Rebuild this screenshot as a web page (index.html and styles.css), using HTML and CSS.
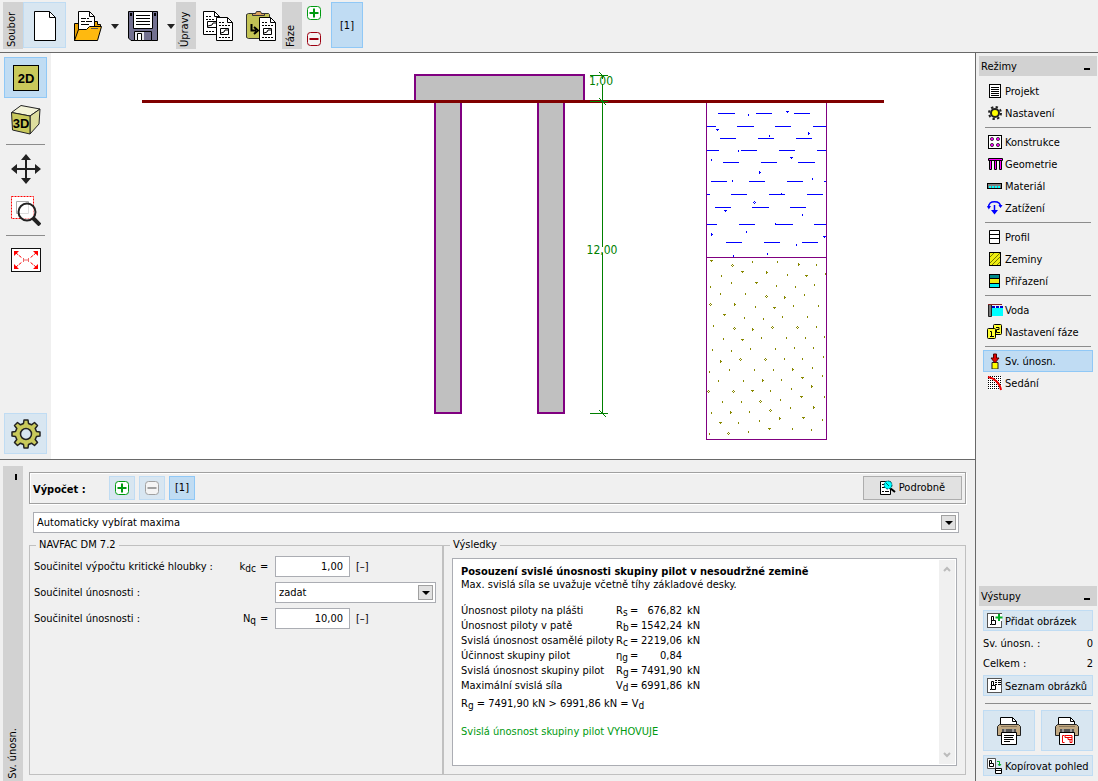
FILE: index.html
```html
<!DOCTYPE html>
<html lang="cs">
<head>
<meta charset="utf-8">
<title>Skupina pilot</title>
<link rel="stylesheet" href="styles.css">
</head>
<body>
<svg class="defs" aria-hidden="true">
  <defs>
    <symbol id="plus" viewBox="0 0 14 14"><rect x=".5" y=".5" width="13" height="13" rx="3" fill="#fff" stroke="currentColor"/><path d="M7 2.500v9M2.500 7h9" stroke="currentColor" stroke-width="2"/></symbol>
    <symbol id="minus" viewBox="0 0 14 14"><rect x=".5" y=".5" width="13" height="13" rx="3" fill="#f4f4f4" stroke="currentColor"/><path d="M2.500 7h9" stroke="currentColor" stroke-width="2"/></symbol>
    <symbol id="printer" viewBox="0 0 24 28"><path d="M3.500 8V.5h12l4 4V8z" fill="#fff" stroke="#000"/><path d="M15.500.5v4h4" fill="none" stroke="#000"/><path d="M2.500 7.500h19l2 2v9H.5v-9z" fill="#c0a882" stroke="#222"/><path d="M4 9.500h16" stroke="#8a765a"/><path d="M5 12h14v3H5z" fill="#555"/><path d="M8 12v3M16 12v3" stroke="#ddd"/><path d="M4.500 15.500h15v12h-15z" fill="#fff" stroke="#000"/></symbol>
    <symbol id="page-b" viewBox="0 0 16 16"><rect x=".5" y=".5" width="14" height="14" fill="#fff" stroke="#555"/><path d="M4.500 3.500h2v4h2v4h-4zM4.500 7.500h2M3 11.500h1" fill="none" stroke="#000"/></symbol>
    <marker id="tick" markerUnits="userSpaceOnUse" markerWidth="1" markerHeight="2"><path d="M0 0h1v2H0z" fill="#00f"/></marker>
    <marker id="tee" markerUnits="userSpaceOnUse" markerWidth="3" markerHeight="2" refX="1"><path d="M0 0h3v1H2v1H1V1H0z" fill="#00f"/></marker>
    <marker id="nub" markerUnits="userSpaceOnUse" markerWidth="2" markerHeight="3" refY="1"><path d="M0 0h1v1h1v1H1v1H0z" fill="#00f"/></marker>
    <marker id="ring" markerUnits="userSpaceOnUse" markerWidth="3" markerHeight="3" refX="1" refY="1"><path d="M1 0h1v1H1zM0 1h1v1H0zM2 1h1v1H2zM1 2h1v1H1z" fill="#00f"/></marker>
    <marker id="tick-s" markerUnits="userSpaceOnUse" markerWidth="1" markerHeight="2"><path d="M0 0h1v2H0z" fill="#880"/></marker>
    <marker id="tee-s" markerUnits="userSpaceOnUse" markerWidth="3" markerHeight="2" refX="1"><path d="M0 0h3v1H2v1H1V1H0z" fill="#880"/></marker>
    <marker id="nub-s" markerUnits="userSpaceOnUse" markerWidth="2" markerHeight="3" refY="1"><path d="M0 0h1v1h1v1H1v1H0z" fill="#880"/></marker>
    <marker id="ring-s" markerUnits="userSpaceOnUse" markerWidth="3" markerHeight="3" refX="1" refY="1"><path d="M1 0h1v1H1zM0 1h1v1H0zM2 1h1v1H2zM1 2h1v1H1z" fill="#880"/></marker>
  </defs>
</svg>

<header class="toolbar">
  <span class="vlabel">Soubor</span>
  <button class="tool tool-new hot" aria-label="Nový"><svg width="24" height="30" viewBox="0 0 24 30"><path d="M1.500.5h15l6 6v23h-21z" fill="#fff" stroke="#000"/><path d="M16.500.5v6h6" fill="none" stroke="#000"/></svg></button>
  <button class="tool tool-open" aria-label="Otevřít"><svg width="28" height="30" viewBox="0 0 28 30"><path d="M.5 29.500v-17h5v-2h18v3h3v4z" fill="#e8a000" stroke="#000"/><path d="M4.500 20V.5h11l5 5V20z" fill="#fff" stroke="#000"/><path d="M15.500.5v5h5" fill="none" stroke="#000"/><path d="M7 7.500h5m1 0h2M7 10.500h4m1 0h6M7 13.500h8" stroke="#000"/><path d="M.5 29.500l4-11h8l3-3h12l-4 14z" fill="#ffb90f" stroke="#000"/><path d="M17 17.500h7" stroke="#555"/></svg></button>
  <button class="tool tool-arrow" aria-label="Poslední soubory"><svg width="8" height="5" viewBox="0 0 8 5"><path d="M0 0h8L4 5z" fill="#222"/></svg></button>
  <button class="tool tool-save" aria-label="Uložit"><svg width="30" height="30" viewBox="0 0 30 30"><path d="M.5.5h29v29H3l-2.500-2.500z" fill="#727090" stroke="#000"/><path d="M5.500.5h19v17h-19z" fill="#fff" stroke="#000"/><path d="M8 4.500h14M8 7.500h14M8 10.500h14M8 13.500h14" stroke="#000"/><path d="M6.500 20.500h17v9h-17z" fill="#e8e8ee" stroke="#000"/><path d="M16 21h7v8h-7z" fill="#727090"/><path d="M9.500 22.500h4v7h-4z" fill="#fff" stroke="#000"/><path d="M2 2h2v3H2zM26 2h2v3h-2z" fill="#000"/></svg></button>
  <button class="tool tool-arrow" aria-label="Uložit jako"><svg width="8" height="5" viewBox="0 0 8 5"><path d="M0 0h8L4 5z" fill="#222"/></svg></button>
  <span class="vlabel">Úpravy</span>
  <button class="tool tool-copy" aria-label="Kopírovat"><svg width="30" height="30" viewBox="0 0 30 30"><path d="M.5.5h11l5 5v18H.5z" fill="#fff" stroke="#000"/><path d="M11.500.5v5h5" fill="none" stroke="#000"/><path d="M3 5.500h6M3 8.500h9M3 20.500h9" stroke="#000" stroke-dasharray="2 1"/><path d="M13 10.500H4.500v6H13M5 15l4-1 1-2h3" fill="none" stroke="#000"/><path d="M13.500 6.500h11l5 5v18h-16z" fill="#fff" stroke="#000"/><path d="M24.500 6.500v5h5" fill="none" stroke="#000"/><path d="M16 11.500h6M16 14.500h11M16 26.500h11" stroke="#000" stroke-dasharray="2 1"/><path d="M17.500 17.500h8v6h-8zM18 22l3-1 1-2h3" fill="none" stroke="#000"/></svg></button>
  <button class="tool tool-paste" aria-label="Vložit"><svg width="30" height="30" viewBox="0 0 30 30"><path d="M2.500 2.500h20l1 1v23l-1 1h-20l-2-1v-23z" fill="#c3c355" stroke="#333"/><path d="M6.500 4.500v-2h3l1-2h4l1 2h3v2z" fill="#d9a05c" stroke="#333"/><path d="M5.500 13v6.500H10M8 16l4 3.500L8 23" fill="none" stroke="#000" stroke-width="2"/><path d="M13.500 6.500h11l5 5v18h-16z" fill="#fff" stroke="#000"/><path d="M24.500 6.500v5h5" fill="none" stroke="#000"/><path d="M16 11.500h6M16 14.500h11M16 26.500h11" stroke="#000" stroke-dasharray="2 1"/><path d="M17.500 17.500h8v6h-8zM18 22l3-1 1-2h3" fill="none" stroke="#000"/></svg></button>
  <span class="vlabel">Fáze</span>
  <div class="phase-edit">
    <button class="green" aria-label="Přidat fázi"><svg width="14" height="14"><use href="#plus"/></svg></button>
    <button class="red" aria-label="Odebrat fázi"><svg width="14" height="14"><use href="#minus"/></svg></button>
  </div>
  <button class="tool tool-phase selected">[1]</button>
</header>

<div class="workspace">
  <main class="main">
    <div class="view">
      <nav class="viewbar" aria-label="Pohled">
        <button class="viewbtn selected" aria-label="2D"><svg width="26" height="26" viewBox="0 0 26 26"><rect x=".5" y=".5" width="25" height="25" fill="#c9c95b" stroke="#000"/><text x="13" y="18" text-anchor="middle" class="glyph">2D</text></svg></button>
        <button class="viewbtn" aria-label="3D"><svg width="30" height="30" viewBox="0 0 30 30"><path d="M.5 7.500L10 .5l19 3.500-10 7z" fill="#f3f3d8" stroke="#222"/><path d="M29 4l-1 15-9 10V11z" fill="#dede9e" stroke="#222"/><path d="M.5 7.500L19 11v18L1.500 25z" fill="#c9c95b" stroke="#222"/><text x="10" y="23" text-anchor="middle" class="glyph">3D</text></svg></button>
        <hr>
        <button class="viewbtn" aria-label="Posun"><svg width="30" height="30" viewBox="0 0 30 30"><path d="M15 4v22M4 15h22" stroke="#222" stroke-width="2"/><path d="M15 0l5 6H10zM15 30l5-6H10zM0 15l6-5v10zM30 15l-6-5v10z" fill="#222"/></svg></button>
        <button class="viewbtn" aria-label="Lupa"><svg width="30" height="30" viewBox="0 0 30 30"><rect x=".5" y=".5" width="22" height="22" fill="#fff" stroke="red" stroke-dasharray="2 1"/><path d="M5.500 5.500h12v12h-12z" fill="#fff" stroke="#aaa"/><path d="M22 22l7 7" stroke="#222" stroke-width="4"/><circle cx="16" cy="16" r="8.500" fill="#fff" fill-opacity=".6" stroke="#222" stroke-width="2"/></svg></button>
        <hr>
        <button class="viewbtn" aria-label="Zobrazit vše"><svg width="30" height="24" viewBox="0 0 30 24"><rect x=".5" y=".5" width="29" height="23" fill="#fff" stroke="#111"/><path d="M5 5l6 5M25 5l-6 5M5 19l6-5M25 19l-6-5" stroke="red" stroke-dasharray="3 1"/><path d="M3 3h5L3 8zM27 3h-5l5 5zM3 21h5l-5-5zM27 21h-5l5-5z" fill="red"/><path d="M12.500 10v4M17.500 10v4M13 12h4" stroke="#e66"/></svg></button>
        <button class="viewbtn hot settings" aria-label="Nastavení zobrazení"><svg width="30" height="30" viewBox="-15 -15 30 30"><path d="M-2.500-10.500L-2-14H2L2.500-10.500 5.500-9.200 8.500-11.500 11.500-8.500 9.200-5.500 10.500-2.500 14-2V2L10.500 2.500 9.200 5.500 11.500 8.500 8.500 11.500 5.500 9.200 2.500 10.500 2 14H-2L-2.500 10.500-5.500 9.200-8.500 11.500-11.500 8.500-9.200 5.500-10.500 2.500-14 2V-2L-10.500-2.500-9.200-5.500-11.500-8.500-8.500-11.500-5.500-9.200z" fill="#c9c95b" stroke="#222" stroke-width="1.500" stroke-linejoin="round"/><circle r="5.500" fill="#d8e6f1" stroke="#222" stroke-width="1.500"/></svg></button>
      </nav>
      <svg class="drawing" viewBox="51 53 924 406" role="img" aria-label="Svislý řez skupinou pilot">
        <g shape-rendering="crispEdges">
          <g fill="#c0c0c0" stroke="#800080" stroke-width="2">
            <rect x="415" y="75" width="169" height="27"/>
            <rect x="435" y="102" width="26" height="311"/>
            <rect x="538" y="102" width="26" height="311"/>
          </g>
          <g stroke="#00f">
            <path d="M718 113.500h17m21 0h16m22 0h16M707 126.500h9m21 0h17m21 0h16m22 0h13M720 138.500h16m22 0h16m22 0h16M707 150.500h12m22 0h16m22 0h16m22 0h9M723 162.500h16m22 0h16m21 0h17M711 181.500h16m22 0h16m22 0h16m21 0h2M707 194.500h3m21 0h16m22 0h16m22 0h16M715 207.500h16m21 0h17m21 0h16M707 224.500h10m22 0h16m20 0h18m21 0h12M726 242.500h16m22 0h16m22 0h16"/>
          </g>
          <g class="clay">
            <polyline class="tick" points="748,114 769,135 738,150 711,159 732,180 812,178 781,193 802,214 746,231 775,223 796,244 733,255 767,253"/>
            <polyline class="tee" points="787,111 717,129 791,157 725,210 824,236"/>
            <polyline class="nub" points="808,133 759,172 711,234"/>
            <polyline class="ring" points="754,202 754,202"/>
          </g>
          <g class="sand">
            <polyline class="tick" points="752,261 777,261 816,264 721,275 787,274 825,273 731,282 776,285 795,286 710,286 814,284 720,293 745,293 804,294 755,306 793,305 818,305 782,316 807,316 744,317 763,318 713,325 816,326 723,338 761,337 786,337 805,337 824,336 712,349 731,350 750,348 775,348 794,347 813,347 784,358 802,358 823,356 709,371 729,369 754,369 773,369 812,367 822,375 718,380 743,380 781,379 791,388 770,390 722,401 741,401 780,399 824,396 790,407 711,412 749,411 759,420 738,422 822,419 792,428 811,429 709,433 748,431"/>
            <polyline class="tee" points="711,260 742,271 756,282 806,275 774,307 724,314 742,339 802,377 752,390 801,396 803,417 720,422 769,428"/>
            <polyline class="nub" points="798,264 766,272 734,304 784,297 752,329 720,361 792,369 762,380 811,386 813,407 730,412 779,418"/>
            <polyline class="ring" points="732,265 766,296 710,304 734,328 772,327 797,327 740,359 765,359 708,391 733,391 760,401 770,410 728,433"/>
          </g>
          <path d="M706.500 103v336.500h120V103M706.500 257.500h120" fill="none" stroke="#800080"/>
          <path d="M142 101.500h742" stroke="#800000" stroke-width="3"/>
          <path d="M602.500 75v339M590 75.500h18M590 101.500h18M590 413.500h18" stroke="#008000"/>
        </g>
        <path d="M599 72l7 7M599 98l7 7M599 410l7 7" stroke="#008000"/>
        <path d="M589 77h25v9h-25zM586 245h32v10h-32z" fill="#fff"/>
        <path d="M602.500 77v2M602.500 84v2M602.500 245v2M602.500 253v2" stroke="#008000"/>
        <text x="601" y="85" text-anchor="middle" class="dim">1,00</text>
        <text x="602" y="254" text-anchor="middle" class="dim">12,00</text>
      </svg>
    </div>

    <section class="frame">
      <div class="frame-tab"><i></i><span>Sv. únosn.</span></div>
      <div class="frame-body">
        <div class="calc-bar">
          <b>Výpočet :</b>
          <button class="chip hot green" aria-label="Přidat výpočet"><svg width="14" height="14"><use href="#plus"/></svg></button>
          <button class="chip hot gray" aria-label="Odebrat výpočet"><svg width="14" height="14"><use href="#minus"/></svg></button>
          <button class="chip selected">[1]</button>
          <button class="detail"><svg width="16" height="16" viewBox="0 0 16 16"><path d="M.5 1.500h10v13H.5z" fill="#fff" stroke="#000"/><path d="M2 4.500h3M2 7.500h3M2 11.500h2m1 0h4" stroke="#000"/><path d="M10 8l5 4" stroke="#000" stroke-width="2"/><circle cx="8" cy="5" r="4" fill="#0ff" stroke="#045" stroke-dasharray="2 1"/><path d="M6 3l3 3" stroke="#066"/></svg>Podrobně</button>
        </div>
        <div class="combo combo-wide">
          <select aria-label="Způsob výpočtu"><option>Automaticky vybírat maxima</option></select>
          <span class="combo-arrow"><svg width="8" height="4" viewBox="0 0 8 4"><path d="M0 0h8L4 4z"/></svg></span>
        </div>
        <div class="groups">
          <fieldset class="group params">
            <legend>NAVFAC DM 7.2</legend>
            <div class="field"><label for="kdc">Součinitel výpočtu kritické hloubky :</label><span class="sym">k<sub>dc</sub></span><span>=</span><input id="kdc" value="1,00"><span class="unit">[–]</span></div>
            <div class="field"><label for="mode">Součinitel únosnosti :</label><span class="sym"></span><span></span>
              <div class="combo"><select id="mode"><option>zadat</option></select><span class="combo-arrow"><svg width="8" height="4" viewBox="0 0 8 4"><path d="M0 0h8L4 4z"/></svg></span></div></div>
            <div class="field"><label for="nq">Součinitel únosnosti :</label><span class="sym">N<sub>q</sub></span><span>=</span><input id="nq" value="10,00"><span class="unit">[–]</span></div>
          </fieldset>
          <fieldset class="group results">
            <legend>Výsledky</legend>
            <div class="report">
              <div class="report-text">
                <h2>Posouzení svislé únosnosti skupiny pilot v nesoudržné zemině</h2>
                <p>Max. svislá síla se uvažuje včetně tíhy základové desky.</p>
                <table>
                  <tr><td>Únosnost piloty na plášti</td><td>R<sub>s</sub></td><td>=</td><td>676,82</td><td>kN</td></tr>
                  <tr><td>Únosnost piloty v patě</td><td>R<sub>b</sub></td><td>=</td><td>1542,24</td><td>kN</td></tr>
                  <tr><td>Svislá únosnost osamělé piloty</td><td>R<sub>c</sub></td><td>=</td><td>2219,06</td><td>kN</td></tr>
                  <tr><td>Účinnost skupiny pilot</td><td>η<sub>g</sub></td><td>=</td><td>0,84</td><td></td></tr>
                  <tr><td>Svislá únosnost skupiny pilot</td><td>R<sub>g</sub></td><td>=</td><td>7491,90</td><td>kN</td></tr>
                  <tr><td>Maximální svislá síla</td><td>V<sub>d</sub></td><td>=</td><td>6991,86</td><td>kN</td></tr>
                </table>
                <p>R<sub>g</sub> = 7491,90 kN &gt; 6991,86 kN = V<sub>d</sub></p>
                <p class="verdict">Svislá únosnost skupiny pilot VYHOVUJE</p>
              </div>
              <div class="scroll"><svg width="8" height="6" viewBox="0 0 8 6"><path d="M1 5l3-3 3 3"/></svg><svg width="8" height="6" viewBox="0 0 8 6"><path d="M1 1l3 3 3-3"/></svg></div>
            </div>
          </fieldset>
        </div>
      </div>
    </section>
  </main>

  <aside class="side">
    <section>
      <h3 class="side-head">Režimy<i></i></h3>
      <nav class="modes">
        <button><svg viewBox="0 0 16 16"><rect x="2.500" y="1.500" width="11" height="13" fill="#fff" stroke="#000"/><path d="M4 4.500h8M4 6.500h8M4 8.500h8M4 10.500h8M4 12.500h8" stroke="#000"/></svg>Projekt</button>
        <button><svg viewBox="0 0 16 16"><circle cx="8" cy="8" r="6" fill="none" stroke="#222" stroke-width="2" stroke-dasharray="2.350 2.350"/><circle cx="8" cy="8" r="4" fill="#ff0" stroke="#222" stroke-width="2"/></svg>Nastavení</button>
        <hr>
        <button><svg viewBox="0 0 16 16"><rect x="1.500" y="1.500" width="13" height="13" fill="#fff" stroke="#000"/><g fill="#f0f" stroke="#222" stroke-width=".8"><circle cx="5" cy="5" r="1.600"/><circle cx="11" cy="5" r="1.600"/><circle cx="5" cy="11" r="1.600"/><circle cx="11" cy="11" r="1.600"/></g></svg>Konstrukce</button>
        <button><svg viewBox="0 0 16 16"><path d="M2.500 4.500h2v9h-2zM7.500 4.500h2v9h-2zM12.500 4.500h2v9h-2z" fill="#f0f" stroke="#000"/><path d="M1.500 2.500h14v2h-14z" fill="#f0f" stroke="#000"/></svg>Geometrie</button>
        <button><svg viewBox="0 0 16 16"><rect x=".5" y="5.500" width="14" height="5" fill="#808080" stroke="#000"/><path d="M2 9h11" stroke="#0ff" stroke-width="2" stroke-dasharray="2 1"/></svg>Materiál</button>
        <button><svg viewBox="0 0 16 16"><path d="M1.500 8C1.500 3 4 1.800 7.500 1.800S13.500 3 13.500 7M7.500 5v8" fill="none" stroke="#00f" stroke-width="1.500"/><path d="M4 10h7l-3.500 4.500zM0 6h4L1.800 9.500zM11.500 5h4l-2 3z" fill="#00f"/></svg>Zatížení</button>
        <hr>
        <button><svg viewBox="0 0 16 16"><path d="M2.500 1.500h10v13h-10zM2.500 5.500h10M2.500 9.500h10" fill="#fff" stroke="#000"/></svg>Profil</button>
        <button><svg viewBox="0 0 16 16"><rect x="2.500" y="1.500" width="11" height="13" fill="#ee1" stroke="#000"/><path d="M3 6l4-4M3 12L13 2M5 14l8-8M10 14l3-3" stroke="#770"/></svg>Zeminy</button>
        <button><svg viewBox="0 0 16 16"><rect x="2.500" y="1.500" width="10" height="13" fill="#ee1" stroke="#000"/><path d="M3 2h9v3H3z" fill="#088"/><path d="M3 11h9v3H3z" fill="#0ee"/><path d="M3 5.500h9M3 10.500h9" stroke="#000"/></svg>Přiřazení</button>
        <hr>
        <button><svg viewBox="0 0 16 16"><path d="M5 6h11v8H5z" fill="#0ff"/><path d="M1.500 2.500h3v12h-3z" fill="#777" stroke="#222"/><path d="M1 2.500h14" stroke="#822"/><path d="M5 5h11" stroke="#00c" stroke-width="2" stroke-dasharray="3 1"/></svg>Voda</button>
        <button><svg viewBox="0 0 16 16"><g fill="#ff3" stroke="#000"><rect x="6.500" y=".5" width="8" height="10" rx="1"/><rect x=".5" y="4.500" width="8" height="10" rx="1"/></g><path d="M3 7.500h1.500V12M3 12.500h4M9 3.500h3v2H9.500v3H13" fill="none" stroke="#000"/></svg>Nastavení fáze</button>
        <hr>
        <button class="selected"><svg viewBox="0 0 16 16"><path d="M5 9.500h6V16H5z" fill="#ff0" stroke="#222"/><path d="M6.500 1h3v4H12L8 10 4 5h2.500z" fill="#d00" stroke="#500"/></svg>Sv. únosn.</button>
        <button><svg viewBox="0 0 16 16"><path d="M1 1h14v14H1z" fill="#fff"/><path d="M1 1.500h14M1 3.500h14M1 5.500h14M1 7.500h14M1 9.500h14M1 11.500h14M1 13.500h14" stroke="#000" stroke-dasharray="1 1"/><path d="M1 2c6 1 12 6 13 13" fill="none" stroke="#e00" stroke-width="2"/></svg>Sedání</button>
      </nav>
    </section>
    <section>
      <h3 class="side-head">Výstupy<i></i></h3>
      <div class="outputs">
        <button class="hot out"><svg width="16" height="16" viewBox="0 0 16 16"><use href="#page-b"/><path d="M9 1h6v7H9z" fill="#fff"/><path d="M12 1v7M8.500 4.500h7" stroke="#0a2" stroke-width="2"/></svg>Přidat obrázek</button>
        <div class="counts">
          <div class="count"><span>Sv. únosn. :</span><span>0</span></div>
          <div class="count"><span>Celkem :</span><span>2</span></div>
        </div>
        <button class="hot out"><svg width="16" height="16" viewBox="0 0 16 16"><use href="#page-b"/><path d="M8 2.500h2m1 0h3M8 4.500h2m1 0h3M8 6.500h2m1 0h3" stroke="#000"/></svg>Seznam obrázků</button>
        <hr>
        <div class="printers">
          <button class="hot" aria-label="Tisk protokolu"><svg width="24" height="28" viewBox="0 0 24 28"><use href="#printer"/><path d="M7 18.500h10M7 20.500h9M7 22.500h10M7 24.500h6" stroke="#000"/></svg></button>
          <button class="hot" aria-label="Tisk pohledu"><svg width="24" height="28" viewBox="0 0 24 28"><use href="#printer"/><path d="M9.500 18.500h-2v7h2M10 18.500h7v7h-2v-3h-2v-2h-3zM12 20.500h5M14 22.500h3" fill="none" stroke="#e00"/></svg></button>
        </div>
        <button class="hot out"><svg width="16" height="16" viewBox="0 0 16 16"><path d="M.5.5h8v10h-8z" fill="#fff" stroke="#555"/><path d="M2.500 2.500h2v3h2v3h-4zM2.500 5.500h2" fill="none" stroke="#000"/><path d="M10 3.500h2.500V7M11 6l1.500 2L14 6" fill="none" stroke="#0a2"/><path d="M8.500 10.500h6v5h-6zM8 12.500h7" fill="#fff" stroke="#000"/></svg>Kopírovat pohled</button>
      </div>
    </section>
  </aside>
</div>
</body>
</html>
```
FILE: styles.css
```css
* { box-sizing: border-box; }
body {
  margin: 0;
  height: 100vh;
  display: flex;
  flex-direction: column;
  background: #f0f0f0;
  color: #000;
  font: 11px/14px "DejaVu Sans Condensed", "DejaVu Sans", sans-serif;
}
button, input, select { font: inherit; color: inherit; border-radius: 0; margin: 0; }
button {
  display: flex;
  align-items: center;
  justify-content: center;
  flex: none;
  padding: 0;
  border: 1px solid transparent;
  background: none;
}
svg { flex: none; display: block; }
hr { margin: 0; border: 0; height: 1px; background: #8c8c8c; }
h2, h3, p { margin: 0; font-size: inherit; }
sub { font-size: 10px; line-height: 0; vertical-align: -2px; }
.defs { position: absolute; width: 0; height: 0; }
.hot { background: #d8e6f1; border-color: #c0dcf3; }
.selected { background: #c0dcf3; border-color: #90c8f6; }
.green { color: #009a10; }
.red { color: #9c0010; }
.gray { color: #a0a0a0; }

.toolbar {
  display: flex;
  flex: none;
  height: 53px;
  padding: 2px 3px;
  border-bottom: 1px solid #696969;
}
.vlabel {
  width: 20px;
  height: 47px;
  padding: 2px 0;
  line-height: 18px;
  background: #d2d2d2;
  writing-mode: vertical-rl;
  transform: rotate(180deg);
}
.tool { height: 46px; padding-top: 2px; }
.tool-new { width: 43px; }
.tool-open { width: 44px; }
.tool-save { width: 46px; }
.tool-copy, .tool-paste { width: 43px; }
.tool-arrow { width: 10px; border: 0; }
.phase-edit { display: flex; flex-direction: column; justify-content: space-between; padding: 4px 5px 2px; height: 46px; }
.phase-edit button { border: 0; }
.tool-phase { width: 32px; margin-left: 5px; }

.workspace { display: flex; flex: 1; min-height: 0; }
.main { display: flex; flex-direction: column; flex: 1; min-width: 0; }
.view { display: flex; flex: 1; min-height: 0; border-bottom: 1px solid #696969; }
.viewbar { display: flex; flex-direction: column; gap: 1px; width: 51px; padding: 4px 4px 5px; }
.viewbtn { width: 43px; height: 41px; }
.viewbar hr { width: 39px; margin: 3px 2px 2px; }
.settings { margin-top: auto; }
.glyph { font: bold 13px "Liberation Sans", Arial, sans-serif; }
.drawing { flex: 1; min-width: 0; height: 100%; background: #fff; }
.dim { font-size: 12px; fill: #008000; }
.drawing polyline { fill: none; }
.clay .tick { marker: url(#tick); }
.clay .tee { marker: url(#tee); }
.clay .nub { marker: url(#nub); }
.clay .ring { marker: url(#ring); }
.sand .tick { marker: url(#tick-s); }
.sand .tee { marker: url(#tee-s); }
.sand .nub { marker: url(#nub-s); }
.sand .ring { marker: url(#ring-s); }

.frame { display: flex; flex: none; height: 321px; padding: 6px 9px 0 3px; }
.frame-tab { width: 20px; padding: 8px 0 2px; display: flex; flex-direction: column; align-items: center; justify-content: space-between; background: #d2d2d2; }
.frame-tab i { width: 2px; height: 6px; margin-right: 6px; align-self: flex-end; background: #000; }
.frame-tab span { writing-mode: vertical-rl; transform: rotate(180deg); }
.frame-body { display: flex; flex-direction: column; flex: 1; min-width: 0; padding: 6px 0 6px 6px; }
.calc-bar {
  display: flex;
  align-items: center;
  gap: 4px;
  height: 32px;
  padding: 0 3px;
  border: 1px solid #a0a0a0;
  box-shadow: inset 1px 1px #fff, 1px 1px #fff;
}
.calc-bar b { width: 72px; padding-top: 4px; }
.chip { width: 26px; height: 24px; }
.detail { width: 99px; height: 24px; margin-left: auto; gap: 3px; border-color: #adadad; background: #e1e1e1; }
.combo { position: relative; display: flex; height: 21px; }
.combo select {
  width: 100%;
  padding: 0 20px 0 3px;
  appearance: none;
  border: 1px solid #abadb3;
  background: #fff;
}
.combo-arrow {
  position: absolute;
  top: 3px;
  right: 3px;
  width: 15px;
  height: 15px;
  display: grid;
  place-items: center;
  border: 1px solid #a0a0a0;
  background: #e1e1e1;
  pointer-events: none;
}
.combo-wide { margin: 8px 7px 5px 4px; }
.groups { display: flex; flex: 1; min-height: 0; }
.group { display: flex; flex-direction: column; margin: 0; min-width: 0; padding: 0 4px; border: 1px solid #c0c0c0; }
.group legend { padding: 0 3px; margin-left: 2px; }
.params { width: 414px; flex: none; padding-top: 4px; gap: 5px; }
.results { flex: 1; padding: 6px 8px 8px; }
.results legend { margin-left: -2px; }
.field { display: grid; grid-template-columns: 192px 26px 11px auto 1fr; align-items: center; column-gap: 4px; height: 21px; }
.sym { text-align: right; }
.field input { width: 75px; height: 21px; padding: 0 6px; border: 1px solid #abadb3; background: #fff; text-align: right; }
.field .combo { width: 161px; }
.unit { padding-left: 2px; }
.report { display: flex; flex: 1; min-height: 0; padding: 1px; border: 1px solid #abadb3; background: #fff; }
.report-text { flex: 1; padding: 5px 7px; }
.report-text h2 { line-height: 13px; }
.report-text p { line-height: 13px; }
.report-text table { margin: 12px 0 4px; border-spacing: 0; line-height: 15px; }
.report-text td { padding: 0; }
.report-text td:nth-child(1) { width: 155px; white-space: nowrap; }
.report-text td:nth-child(2) { width: 14px; }
.report-text td:nth-child(3) { width: 11px; }
.report-text td:nth-child(4) { width: 41px; text-align: right; }
.report-text td:nth-child(5) { padding-left: 5px; }
.report-text .verdict { margin-top: 15px; color: #009a10; }
.scroll { width: 16px; padding: 6px 4px; display: flex; flex-direction: column; justify-content: space-between; background: #f0f0f0; }
.scroll path { fill: none; stroke: #bcbcbc; stroke-width: 2; }

.side { display: flex; flex-direction: column; justify-content: space-between; flex: none; width: 123px; padding: 3px 1px 5px 3px; border-left: 1px solid #696969; }
.side-head { display: flex; justify-content: space-between; align-items: center; height: 20px; padding: 1px 7px 0 2px; background: #d2d2d2; font-weight: normal; }
.side-head i { width: 6px; height: 2px; margin-top: 5px; background: #000; }
.modes { padding: 4px; }
.modes button, .out { width: 100%; padding: 2px 0 0 3px; gap: 2px; justify-content: flex-start; white-space: nowrap; }
.modes button { height: 22px; }
.modes svg { width: 16px; height: 16px; }
.modes svg, .out svg { margin-bottom: 2px; }
.modes hr { margin: 3px 2px; }
.outputs { padding: 4px 4px 0; }
.out { height: 21px; }
.counts { padding: 3px 0 1px; }
.count { display: flex; justify-content: space-between; line-height: 20px; }
.outputs hr { margin: 7px 2px 6px; }
.printers { display: grid; grid-template-columns: 1fr 1fr; gap: 6px; margin-bottom: 4px; }
.printers button { height: 41px; }
```
